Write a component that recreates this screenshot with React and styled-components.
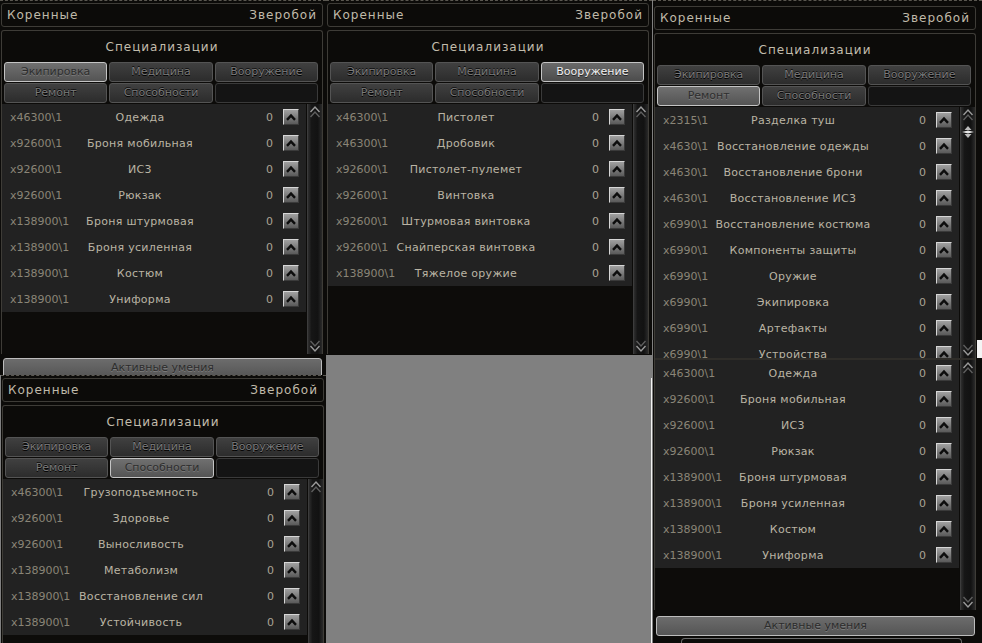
import React from "react";
import styled, { createGlobalStyle, css } from "styled-components";

const GlobalStyle = createGlobalStyle`
  html, body {
    margin: 0;
    padding: 0;
    background: #808080;
  }
  body {
    font-family: "DejaVu Sans", "Noto Sans CJK SC", sans-serif;
  }
`;

const Desk = styled.div`
  position: relative;
  width: 982px;
  height: 643px;
  overflow: hidden;
  background: #808080;
`;

// each screenshot sits on the canvas like a window on a desktop
const Window = styled.div`
  position: absolute;
  left: ${p => p.$left}px;
  top: ${p => p.$top}px;
  width: ${p => p.$width}px;
  height: ${p => p.$height}px;
  box-sizing: border-box;
  overflow: hidden;
  background: #0c0b09;
  border-top: 1px dashed #5a5750;
  padding-top: ${p => p.$pad}px;
`;

// white leftovers where the screenshots were glued together
const Glint = styled.div`
  position: absolute;
  left: ${p => p.$left}px;
  top: ${p => p.$top}px;
  width: ${p => p.$width}px;
  height: ${p => p.$height}px;
  background: #f4f4f4;
`;

const Inner = styled.div`
  width: 323px;
  display: flex;
  flex-direction: column;
`;

const HeaderBar = styled.div`
  margin-left: 1px;
  height: 24px;
  box-sizing: border-box;
  border: 1px solid #3e3c37;
  border-radius: 3px;
  padding: 0 5px;
  display: flex;
  align-items: center;
  justify-content: space-between;
  color: #c0baaa;
  font-size: 12px;
  letter-spacing: 1px;
`;

const SpecBox = styled.div`
  margin: 3px 0 0 1px;
  border: 1px solid #3e3c37;
  border-bottom: none;
  border-radius: 3px 3px 0 0;
  display: flex;
  flex-direction: column;
`;

const SpecTitle = styled.div`
  height: 31px;
  display: flex;
  align-items: center;
  justify-content: center;
  color: #c2bcac;
  font-size: 12px;
  letter-spacing: 1px;
`;

const TabGrid = styled.div`
  display: grid;
  grid-template-columns: repeat(3, 1fr);
  grid-auto-rows: 20px;
  gap: 1px 2px;
  margin: 0 4px 1px 2px;
`;

const Tab = styled.div`
  box-sizing: border-box;
  border: 1px solid #545454;
  border-radius: 3px;
  background: linear-gradient(#404040, #2c2c2c);
  color: #7a7a7a;
  font-size: 11px;
  line-height: 18px;
  text-align: center;
  text-shadow: 0 1px 0 #000, 0 -1px 0 #111;
  ${p =>
    p.$state === "on" &&
    css`
      border-color: #c4c4c4;
      background: linear-gradient(#707070, #545454);
      color: #2e2e2e;
      text-shadow: 0 1px 0 #7a7a7a;
    `}
  ${p =>
    p.$state === "lit" &&
    css`
      border-color: #c4c4c4;
      background: linear-gradient(#6a6a6a, #4c4c4c);
      color: #f0f0f0;
      text-shadow: 0 1px 0 #222;
    `}
  ${p =>
    p.$state === "empty" &&
    css`
      border-color: #3a3a3a;
      background: #141414;
    `}
`;

const ListArea = styled.div`
  display: flex;
  gap: 1px;
  height: ${p => p.$h}px;
  overflow: hidden;
`;

const Rows = styled.div`
  flex: 1;
  display: flex;
  flex-direction: column;
  background: #0d0c0a;
  overflow: hidden;
`;

const Row = styled.div`
  flex-shrink: 0;
  height: 26px;
  display: grid;
  grid-template-columns: 64px 132px 1fr 16px;
  align-items: center;
  padding: 0 7px 0 8px;
  background: #222222;
  font-size: 11px;
`;

const Code = styled.span`
  color: #8a8577;
  white-space: nowrap;
`;

const Name = styled.span`
  display: flex;
  justify-content: center;
  white-space: nowrap;
  color: #bab4a4;
  letter-spacing: 0.3px;
`;

const Zero = styled.span`
  text-align: right;
  padding-right: 10px;
  color: #aaa495;
`;

const UpButton = styled.span`
  width: 16px;
  height: 16px;
  box-sizing: border-box;
  border: 1px solid;
  border-color: #d6d6d6 #3a3a3a #3a3a3a #d6d6d6;
  background: linear-gradient(#a0a0a0, #5a5a5a);
  display: flex;
  align-items: center;
  justify-content: center;
`;

const Scrollbar = styled.div`
  width: 14px;
  display: flex;
  flex-direction: column;
  justify-content: space-between;
  background: linear-gradient(to right, #2e2e2e, #161616 25%, #121212 70%, #2a2a2a);
  border-left: 1px solid #3c3c3c;
`;

const ScrollEnd = styled.div`
  height: 16px;
  display: flex;
  align-items: center;
  justify-content: center;
`;

const Thumb = styled.div`
  height: 14px;
  margin-top: 2px;
  display: flex;
  justify-content: center;
`;

const Track = styled.div`
  flex: 1;
`;

const Seam = styled.div`
  height: 2px;
  background: #2f2d29;
`;

const ActiveButton = styled.div`
  margin: ${p => p.$gap}px 1px 0 3px;
  height: 20px;
  box-sizing: border-box;
  border: 1px solid #bcbcbc;
  border-radius: 3px;
  background: linear-gradient(#6c6c6c, #555555);
  color: #2c2c2c;
  font-size: 11px;
  line-height: 18px;
  text-align: center;
  text-shadow: 0 1px 0 #7c7c7c;
`;

const NextButton = styled.div`
  margin: 2px 14px 0 28px;
  height: 10px;
  border: 1px solid #6a6a6a;
  border-bottom: none;
  border-radius: 4px 4px 0 0;
`;

const Chevron = () => (
  <svg width="10" height="8" viewBox="0 0 10 8">
    <path d="M1 6.8 L5 2.6 L9 6.8" stroke="#0d0d0d" strokeWidth="2.4" fill="none" />
  </svg>
);

const ArrowUp = () => (
  <svg width="12" height="14" viewBox="0 0 12 14">
    <path d="M1.5 7 L6 2 L10.5 7" stroke="#9a9a9a" strokeWidth="1.4" fill="none" />
    <path d="M1.5 12 L6 7 L10.5 12" stroke="#5e5e5e" strokeWidth="1.4" fill="none" />
  </svg>
);

const ArrowDown = () => (
  <svg width="12" height="14" viewBox="0 0 12 14">
    <path d="M1.5 2 L6 7 L10.5 2" stroke="#5e5e5e" strokeWidth="1.4" fill="none" />
    <path d="M1.5 7 L6 12 L10.5 7" stroke="#9a9a9a" strokeWidth="1.4" fill="none" />
  </svg>
);

const ThumbIcon = () => (
  <svg width="14" height="14" viewBox="0 0 14 14">
    <path d="M7 1 L10.5 5 L3.5 5 Z" fill="#bdbdbd" />
    <path d="M1 7 L7 5.5 L13 7 L7 8.5 Z" fill="#e6e6e6" />
    <path d="M7 13 L10.5 9 L3.5 9 Z" fill="#bdbdbd" />
  </svg>
);

const TAB_NAMES = ["Экипировка", "Медицина", "Вооружение", "Ремонт", "Способности"];

const equipment = [
  ["x46300\\1", "Одежда"],
  ["x92600\\1", "Броня мобильная"],
  ["x92600\\1", "ИС3"],
  ["x92600\\1", "Рюкзак"],
  ["x138900\\1", "Броня штурмовая"],
  ["x138900\\1", "Броня усиленная"],
  ["x138900\\1", "Костюм"],
  ["x138900\\1", "Униформа"]
];

const weapons = [
  ["x46300\\1", "Пистолет"],
  ["x46300\\1", "Дробовик"],
  ["x92600\\1", "Пистолет-пулемет"],
  ["x92600\\1", "Винтовка"],
  ["x92600\\1", "Штурмовая винтовка"],
  ["x92600\\1", "Снайперская винтовка"],
  ["x138900\\1", "Тяжелое оружие"]
];

const repair = [
  ["x2315\\1", "Разделка туш"],
  ["x4630\\1", "Восстановление одежды"],
  ["x4630\\1", "Восстановление брони"],
  ["x4630\\1", "Восстановление ИС3"],
  ["x6990\\1", "Восстановление костюма"],
  ["x6990\\1", "Компоненты защиты"],
  ["x6990\\1", "Оружие"],
  ["x6990\\1", "Экипировка"],
  ["x6990\\1", "Артефакты"],
  ["x6990\\1", "Устройства"]
];

const abilities = [
  ["x46300\\1", "Грузоподъемность"],
  ["x92600\\1", "Здоровье"],
  ["x92600\\1", "Выносливость"],
  ["x138900\\1", "Метаболизм"],
  ["x138900\\1", "Восстановление сил"],
  ["x138900\\1", "Устойчивость"]
];

function SkillList({ items, height, thumb }) {
  return (
    <ListArea $h={height}>
      <Rows>
        {items.map(([code, name], i) => (
          <Row key={i}>
            <Code>{code}</Code>
            <Name>{name}</Name>
            <Zero>0</Zero>
            <UpButton>
              <Chevron />
            </UpButton>
          </Row>
        ))}
      </Rows>
      <Scrollbar>
        <ScrollEnd>
          <ArrowUp />
        </ScrollEnd>
        {thumb && (
          <Thumb>
            <ThumbIcon />
          </Thumb>
        )}
        <Track />
        <ScrollEnd>
          <ArrowDown />
        </ScrollEnd>
      </Scrollbar>
    </ListArea>
  );
}

function Panel({ left, top, width, height, pad, active, lit, children, footer }) {
  return (
    <Window $left={left} $top={top} $width={width} $height={height} $pad={pad}>
      <Inner>
        <HeaderBar>
          <span>Коренные</span>
          <span>Зверобой</span>
        </HeaderBar>
        <SpecBox>
          <SpecTitle>Специализации</SpecTitle>
          <TabGrid>
            {TAB_NAMES.map((name, i) => (
              <Tab key={name} $state={i === active ? (lit ? "lit" : "on") : undefined}>
                {name}
              </Tab>
            ))}
            <Tab $state="empty" />
          </TabGrid>
          {children}
        </SpecBox>
        {footer}
      </Inner>
    </Window>
  );
}

export default function App() {
  return (
    <>
      <GlobalStyle />
      <Desk>
        <Panel
          left={0}
          top={0}
          width={326}
          height={375}
          pad={2}
          active={0}
          footer={<ActiveButton $gap={4}>Активные умения</ActiveButton>}
        >
          <SkillList items={equipment} height={250} />
        </Panel>

        <Panel left={326} top={0} width={326} height={355} pad={2} active={2} lit>
          <SkillList items={weapons} height={250} />
        </Panel>

        <Panel
          left={653}
          top={0}
          width={329}
          height={643}
          pad={5}
          active={3}
          footer={
            <>
              <ActiveButton $gap={6}>Активные умения</ActiveButton>
              <NextButton />
            </>
          }
        >
          <SkillList items={repair} height={251} thumb />
          <Seam />
          <SkillList items={equipment} height={250} />
        </Panel>

        <Panel left={1} top={375} width={325} height={268} pad={2} active={4}>
          <SkillList items={abilities} height={200} />
        </Panel>

        <Glint $left={977} $top={340} $width={5} $height={18} />
        <Glint $left={651} $top={378} $width={1} $height={265} />
      </Desk>
    </>
  );
}
